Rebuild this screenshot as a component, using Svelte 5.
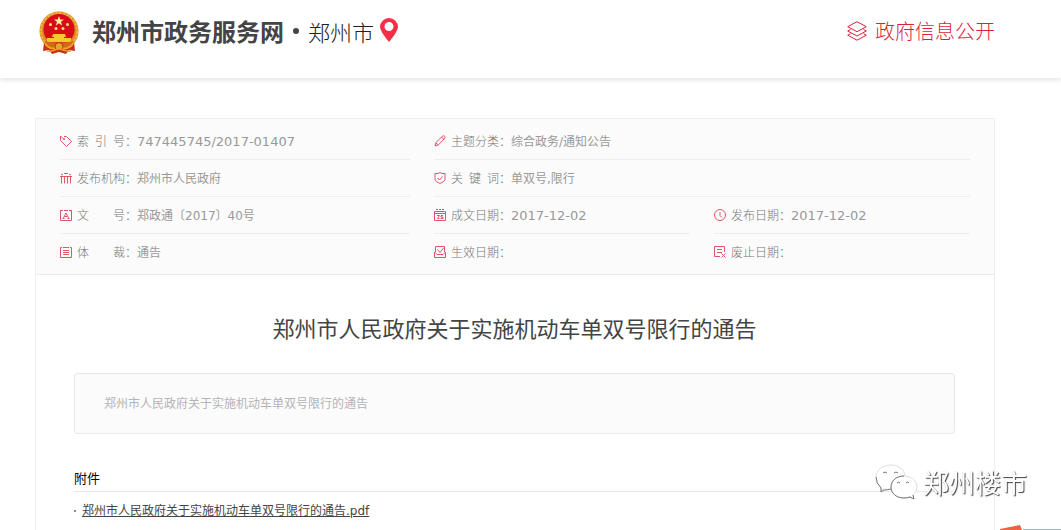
<script lang="ts">
	type Field = { label: string; value: string; icon: string; wide?: boolean };

	const fields: Field[] = [
		{ label: '索 引 号', value: '747445745/2017-01407', icon: 'tag' },
		{ label: '主题分类', value: '综合政务/通知公告', icon: 'pencil', wide: true },
		{ label: '发布机构', value: '郑州市人民政府', icon: 'bank' },
		{ label: '关 键 词', value: '单双号,限行', icon: 'shield', wide: true },
		{ label: '文 号', value: '郑政通〔2017〕40号', icon: 'letter' },
		{ label: '成文日期', value: '2017-12-02', icon: 'calendar' },
		{ label: '发布日期', value: '2017-12-02', icon: 'clock' },
		{ label: '体 裁', value: '通告', icon: 'list' },
		{ label: '生效日期', value: '', icon: 'inbox' },
		{ label: '废止日期', value: '', icon: 'expired' }
	];

	const icons: Record<string, string> = {
		tag: 'M.5 1v4.5l6 6 5-5-5-5H4M.5 1l3 3M3.5 3.5h1v1h-1z',
		pencil: 'M1 11l1-3.5L8.5 1q1-.8 2 .2t.3 2L4.5 9.8zM7.5 2l2.5 2.5M2 7.8l2.2 2',
		bank: 'M0 4.5h12M1 3l2-1M4 1.500h4M9 2l2 1M1.5 4.5v7M4.5 4.5v7M7.5 4.5v7M10.5 4.5v7',
		shield: 'M6 .5l2 1h3v6q0 2-5 4-5-2-5-4v-6h3zM3.5 6l2 2 3-3.5',
		letter: 'M.5 1v10.5h11V1M0 1.5h3M4 1.5h4M9 1.5h3M3.5 9l2.5-5 2.5 5M4.5 7.5h3M2.5 9.5h2M7.5 9.5h2',
		calendar: 'M.5 2.5h11v9H.5zM0 4.5h12M2 .5h2M5 .5h2M8 .5h2M3 6.5h2.5L3.5 9.5h2M9 6.5H7V8h2v1.5H6.5',
		clock: 'M6 .5a5.5 5.5 0 1 0 0 11a5.5 5.5 0 1 0 0-11M6 3v3.5l2 2',
		list: 'M2 1.5H.5v10h11v-10H10M3 1.5h6M3 4.5h6M3 6.5h6M3 8.5h6',
		inbox: 'M1.5 6V.5h9V6M.5 6v5.5h11V6L9 8.5H3zM3.5 3.5l2.5 3 4-5',
		expired: 'M6 10.5H.5v-10h10V6M3 3.5h5M3 6.5h5M7.5 7.5l4 4M11.5 7.5l-4 4'
	};
</script>

<div class="page">
	<header>
		<a class="brand" href="#home">
			<svg class="emblem" viewBox="0 0 40 44" aria-hidden="true">
				<path d="M5 31l-1 9 6-1 3 4 7-2 7 2 3-4 6 1-1-9z" fill="#c9301f" />
				<circle cx="20" cy="20" r="19.5" fill="#d98a22" />
				<circle cx="20" cy="20" r="18" fill="none" stroke="#f0b341" stroke-width="2" stroke-dasharray="3 1" />
				<circle cx="20" cy="18.5" r="15.5" fill="#d90d19" />
				<path d="M20 5l1.2 3.5H25l-3 2.3 1.1 3.7-3.1-2.2-3.1 2.2 1.1-3.7-3-2.3h3.8z" fill="#fff0a0" />
				<g fill="#ffdf7c">
					<circle cx="11.5" cy="13.5" r="1.5" />
					<circle cx="28.5" cy="13.5" r="1.5" />
					<circle cx="17" cy="17.5" r="1.5" />
					<circle cx="24" cy="17.5" r="1.5" />
				</g>
				<path d="M14 23h12l1 3H13zM8 27h24v4H8zM15 26h10v2H15z" fill="#f9c62f" />
				<path d="M5 30q15 3 30 0-5 8-15 8T5 30z" fill="#d7661d" />
				<circle cx="20" cy="35.5" r="4" fill="#e8a12c" stroke="#b82a14" />
				<path d="M6 33q5 6 10 4M34 33q-5 6-10 4M8 40q6 1 12-3 6 4 12 3" fill="none" stroke="#f0a428" stroke-width="1.5" />
			</svg>
			<strong>郑州市政务服务网</strong>
		</a>
		<i class="dot"></i>
		<a class="city" href="#city">
			郑州市
			<svg class="pin" viewBox="0 0 18 24" aria-hidden="true">
				<path d="M9 0a9 9 0 0 1 9 9q0 4-9 15Q0 13 0 9a9 9 0 0 1 9-9zm0 4a4.5 4.5 0 1 0 0 9 4.5 4.5 0 1 0 0-9z" fill="#f52d45" />
			</svg>
		</a>
		<a class="open" href="#open">
			<svg viewBox="0 0 20 20" aria-hidden="true">
				<path d="M10 .7l9.3 5-9.3 5-9.3-5zM3.5 8.5L.7 10l9.3 5 9.3-5-2.8-1.5M3.5 12.7L.7 14.2l9.3 5 9.3-5-2.8-1.5" />
			</svg>
			政府信息公开
		</a>
	</header>

	<main>
		<dl class="info">
			{#each fields as field}
				<div class="field" class:wide={field.wide}>
					<dt>
						<svg viewBox="0 0 12 12" aria-hidden="true"><path d={icons[field.icon]} /></svg>
						<span class="label">{field.label}</span><span class="colon">：</span>
					</dt>
					<dd class:number={/^[\d/-]+$/.test(field.value)}>{field.value}</dd>
				</div>
			{/each}
		</dl>

		<article>
			<h1>郑州市人民政府关于实施机动车单双号限行的通告</h1>
			<p class="summary">郑州市人民政府关于实施机动车单双号限行的通告</p>
			<h2>附件</h2>
			<ul>
				<li><a href="#attachment">郑州市人民政府关于实施机动车单双号限行的通告.pdf</a></li>
			</ul>
		</article>
	</main>

	<div class="watermark">
		<svg viewBox="0 0 43 36" aria-hidden="true">
			<path d="M8 25l-2 3v-4Q1 19 1 13C1 6 8 1 16 1s14 5 14 11q-14 1-14 13-4 1-8 0z" />
			<path d="M1 13q0 6 5 11v4l3-2q3 0 7-1" class="shade" />
			<path d="M29 12c8 0 13 5 13 11q0 5-4 8l1 4-4-2q-3 1-6 1c-8 0-13-5-13-11s5-11 13-11z" />
			<path d="M29 12c-8 0-13 5-13 11s5 11 13 11q3 0 6-1l4 2-1-4" class="shade" />
			<path d="M8 9q2-2 4 0M19 9q2-2 4 0M22 19q2-2 3 0M31 19q2-2 3 0" class="shade" />
		</svg>
		<span>郑州楼市</span>
	</div>
	<svg class="corner" viewBox="0 0 61 5" aria-hidden="true">
		<path d="M0 4L20 0l2 5H0z" fill="#ee6240" />
		<path d="M23 4h38v1H23z" fill="#a9b8c6" />
	</svg>
</div>

<style>
	:global(body) {
		margin: 0;
		background: #fff;
	}

	.page {
		display: flex;
		flex-direction: column;
		min-height: 100vh;
		overflow: hidden;
		color: #444;
		font: 12px/18px 'DejaVu Sans', 'Noto Sans CJK SC', sans-serif;
	}

	a {
		color: inherit;
		text-decoration: none;
	}

	header {
		display: flex;
		align-items: center;
		height: 62px;
		padding: 0 66px 16px 39px;
		box-shadow: 0 2px 5px rgba(0, 0, 0, 0.11);
		font-family: 'Noto Sans CJK SC', sans-serif;
	}

	.brand {
		display: flex;
		align-items: center;
		gap: 13px;
		font-size: 24px;
		line-height: 36px;
	}

	.emblem {
		width: 40px;
		height: 44px;
		padding-top: 4px;
	}

	.dot {
		width: 6px;
		height: 6px;
		margin: 0 9px;
		border-radius: 50%;
		background: #444;
	}

	.city {
		display: flex;
		align-items: center;
		gap: 6px;
		font-size: 22px;
		font-weight: 300;
		line-height: 32px;
		color: #222;
	}

	.pin {
		width: 18px;
		height: 24px;
		padding-bottom: 2px;
	}

	.open {
		display: flex;
		align-items: center;
		gap: 8px;
		margin-left: auto;
		color: #dc1f39;
		font-size: 20px;
		font-weight: 300;
		line-height: 30px;
	}

	.open svg {
		width: 20px;
		height: 20px;
		fill: none;
		stroke: currentColor;
		stroke-width: 1;
	}

	main {
		flex: 1;
		margin: 40px 66px 0 35px;
		border: 1px solid #eee;
		border-bottom: 0;
	}

	.info {
		display: grid;
		grid-template-columns: 350fr 256fr 256fr;
		column-gap: 24px;
		margin: 0;
		padding: 4px 24px 3px;
		border-bottom: 1px solid #eaeaea;
		background: #fbfbfb;
		color: #999;
	}

	.field {
		display: flex;
		align-items: center;
		height: 36px;
		border-bottom: 1px solid #eee;
	}

	.field:nth-last-child(-n + 3) {
		border-bottom-color: transparent;
	}

	.wide {
		grid-column: span 2;
	}

	dt {
		display: flex;
		align-items: center;
		color: #777;
		font-weight: 300;
	}

	dt svg {
		width: 12px;
		height: 12px;
		margin-right: 5px;
		fill: none;
		stroke: #e0566a;
	}

	.label,
	.colon,
	dd {
		padding-top: 2px;
	}

	.label {
		width: 48px;
		text-align-last: justify;
	}

	.colon {
		width: 12px;
	}

	dd {
		margin: 0;
	}

	.number {
		font-size: 13px;
	}

	article {
		padding: 34px 39px 8px 38px;
	}

	h1 {
		margin: 0;
		font: 22px/36px 'Noto Sans CJK SC', sans-serif;
		text-align: center;
	}

	.summary {
		margin: 28px 0 34px;
		padding: 21px 29px 20px;
		border: 1px solid #e8e8e8;
		border-radius: 3px;
		background: #fbfbfb;
		color: #b4b4b4;
	}

	h2 {
		margin: 0;
		padding-bottom: 4px;
		border-bottom: 1px solid #e6e9ec;
		color: #000;
		font: 13px/19px 'Noto Sans CJK SC', sans-serif;
	}

	ul {
		margin: 10px 0 0;
		padding: 0;
		list-style: none;
	}

	li {
		display: flex;
		align-items: center;
		gap: 6px;
	}

	li::before {
		content: '';
		width: 2px;
		height: 2px;
		background: #888;
	}

	li a {
		text-decoration: underline;
	}

	.watermark {
		position: fixed;
		right: 34px;
		bottom: 29px;
		display: flex;
		align-items: center;
		gap: 5px;
		color: #fff;
		font: 26px/38px 'Noto Sans CJK SC', sans-serif;
		text-shadow: 1px 1px 1px #444, 0 0 1px #ccc;
	}

	.watermark svg {
		width: 43px;
		height: 36px;
		fill: #fff;
		stroke: #ddd;
		stroke-width: 1;
	}

	.watermark .shade {
		fill: none;
		stroke: #777;
	}

	.corner {
		position: fixed;
		right: 0;
		bottom: 0;
		width: 61px;
		height: 5px;
	}
</style>
